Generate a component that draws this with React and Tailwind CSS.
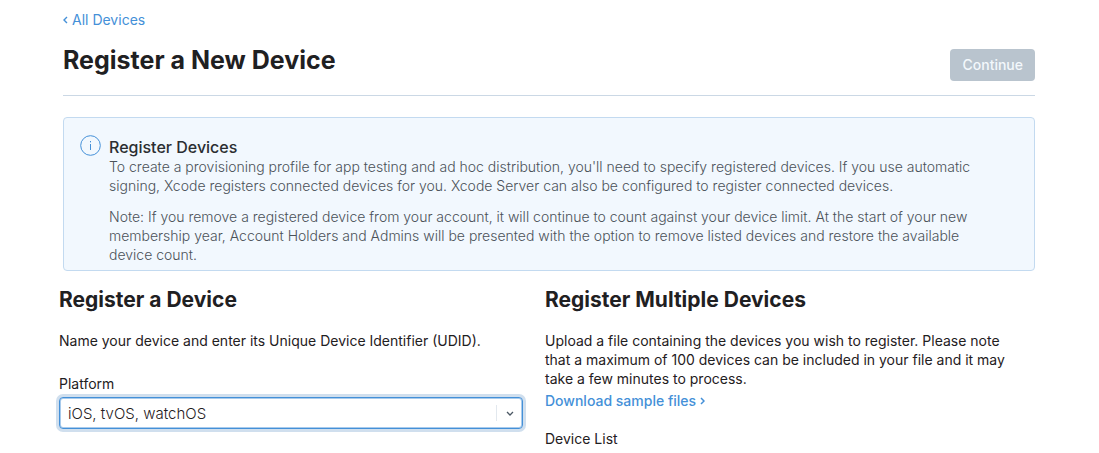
import React from "react";

export default function App() {
  return (
    <main className="pl-[63px] pr-16 pt-[10px] font-['Inter',sans-serif] text-[#1f2022]">
      <a href="#devices" className="flex w-fit items-center gap-1 text-[14px] leading-[19px] text-[#4490d8]">
        <svg width="5" height="8" viewBox="0 0 5 8" fill="none" stroke="currentColor" strokeWidth="1.4"><path d="M4 1 1 4l3 3" /></svg>
        All Devices
      </a>
      <header className="mt-4 flex items-start justify-between border-b border-[#cbd8e5] pb-[14px]">
        <h1 className="text-[25px] font-bold leading-[30px]">Register a New Device</h1>
        <button type="button" disabled className="mt-1 h-8 rounded bg-[#b9c4ce] px-3 pb-[2px] text-[14px] font-medium leading-[19px] text-[#f3f8fc]">Continue</button>
      </header>
      <section className="mt-[21px] flex gap-2 rounded border border-[#c3daf0] bg-[#f2f8fe] pt-[17px] pb-[6px] pl-4 pr-12">
        <svg className="shrink-0" width="21" height="21" viewBox="0 0 21 21" fill="none" stroke="#4490d8"><circle cx="10.5" cy="10.5" r="9.8" /><path d="M10.5 9v6M10.5 6v1.4" /></svg>
        <div className="text-[14px] font-light leading-[19px] text-[#4b5259]">
          <h2 className="pt-[3px] text-[16px] font-medium text-[#2b2e31]">Register Devices</h2>
          <p>To create a provisioning profile for app testing and ad hoc distribution, you'll need to specify registered devices. If you use automatic signing, Xcode registers connected devices for you. Xcode Server can also be configured to register connected devices.</p>
          <p className="mt-3">Note: If you remove a registered device from your account, it will continue to count against your device limit. At the start of your new membership year, Account Holders and Admins will be presented with the option to remove listed devices and restore the available device count.</p>
        </div>
      </section>
      <div className="-ml-1 mr-[26px] mt-4 grid grid-cols-2 gap-[22px] text-[14px] leading-[19px]">
        <section>
          <h2 className="text-[21px] font-bold leading-[26px]">Register a Device</h2>
          <p className="mt-[18px]">Name your device and enter its Unique Device Identifier (UDID).</p>
          <label htmlFor="platform" className="mt-6 block">Platform</label>
          <div className="relative mt-1">
            <select id="platform" className="block h-8 w-full appearance-none rounded-sm border border-[#4490d8] bg-white pl-2 pr-8 text-[15px] font-light shadow-[inset_0_0_0_1px_#a9cbec,0_0_0_3px_#d0dfee] outline-none"><option>iOS, tvOS, watchOS</option></select>
            <span className="pointer-events-none absolute inset-y-2 right-0 flex w-[27px] items-center justify-center border-l border-[#e2e8ee]">
              <svg width="8" height="5" viewBox="0 0 8 5" fill="none" stroke="#4b5864" strokeWidth="1.3"><path d="m1 1 3 3 3-3" /></svg>
            </span>
          </div>
        </section>
        <section>
          <h2 className="text-[21px] font-bold leading-[26px]">Register Multiple Devices</h2>
          <p className="mt-[18px]">Upload a file containing the devices you wish to register. Please note that a maximum of 100 devices can be included in your file and it may take a few minutes to process.</p>
          <a href="#samples" className="mt-[3px] flex w-fit items-center gap-1 font-medium text-[#4490d8]">
            Download sample files
            <svg width="5" height="8" viewBox="0 0 5 8" fill="none" stroke="currentColor" strokeWidth="1.5"><path d="m1 1 3 3-3 3" /></svg>
          </a>
          <h3 className="mt-[19px]">Device List</h3>
        </section>
      </div>
    </main>
  );
}
